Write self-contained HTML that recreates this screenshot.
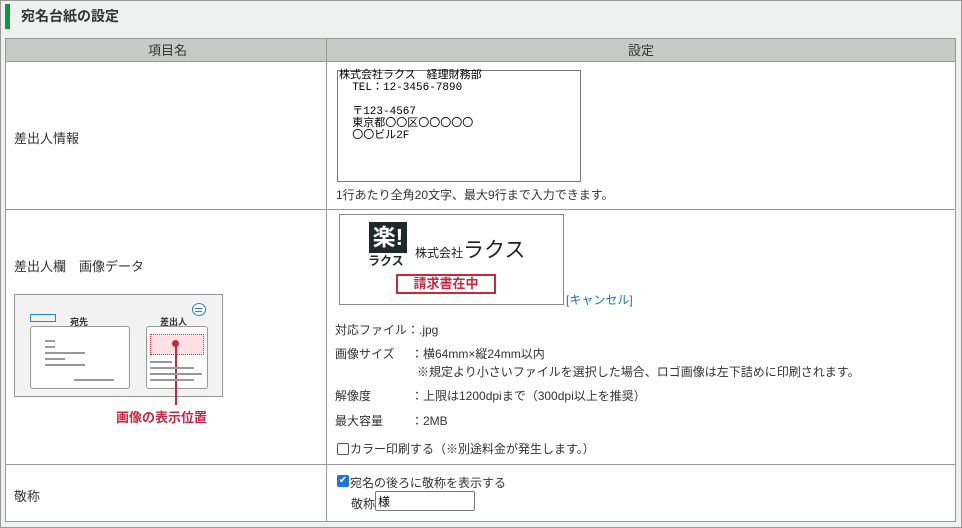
<html><head><style>
body{margin:0;width:962px;height:528px;background:#eff1f0;font-family:"Liberation Sans","Noto Sans CJK JP",sans-serif;color:#333;position:relative;overflow:hidden}
.a{position:absolute}
.t{font-size:12px;white-space:nowrap}
</style></head><body>
<div class="a" style="left:0;top:0;width:960px;height:526px;border:1px solid #999"></div>
<div class="a" style="left:5px;top:4px;width:5px;height:25px;background:#0a9a3c"></div>
<div class="a" style="left:21px;top:6px;font-size:14px;font-weight:bold;color:#333">宛名台紙の設定</div>
<div class="a" style="left:5px;top:38px;width:949px;height:482px;background:#fff;border:1px solid #999"></div>
<div class="a" style="left:6px;top:39px;width:949px;height:22px;background:#c8cac7;border-bottom:1px solid #999"></div>
<div class="a" style="left:326px;top:39px;width:1px;height:482px;background:#999"></div>
<div class="a" style="left:6px;top:209px;width:949px;height:1px;background:#999"></div>
<div class="a" style="left:6px;top:464px;width:949px;height:1px;background:#999"></div>
<div class="a t" style="left:148px;top:40px;font-size:13px">項目名</div>
<div class="a t" style="left:628px;top:40px;font-size:13px">設定</div>
<div class="a t" style="left:14px;top:128px;font-size:13px">差出人情報</div>
<div class="a t" style="left:14px;top:256px;font-size:13px">差出人欄　画像データ</div>
<div class="a t" style="left:14px;top:486px;font-size:13px">敬称</div>
<!-- textarea -->
<div class="a" style="left:337px;top:70px;width:242px;height:110px;border:1px solid #777;background:#fff"></div>
<div class="a" style="left:339px;top:70px;font-family:'Liberation Mono','Noto Sans CJK JP',monospace;font-size:11px;line-height:12px;color:#000;white-space:pre">株式会社ラクス　経理財務部
  TEL：12-3456-7890

  〒123-4567
  東京都〇〇区〇〇〇〇〇
  〇〇ビル2F</div>
<div class="a t" style="left:336px;top:186px">1行あたり全角20文字、最大9行まで入力できます。</div>
<!-- diagram -->
<div class="a" style="left:14px;top:294px;width:207px;height:101px;background:#f2f2f2;border:1px solid #999"></div>
<div class="a" style="left:30px;top:314px;width:24px;height:6px;border:1px solid #1a8ad4"></div>
<div class="a t" style="left:70px;top:315px;font-size:9px;font-weight:bold">宛先</div>
<div class="a t" style="left:160px;top:315px;font-size:9px;font-weight:bold">差出人</div>
<div class="a" style="left:192px;top:303px;width:12px;height:11px;border:1.5px solid #1a8ad4;border-radius:50%;background:#fff"></div>
<div class="a" style="left:195px;top:308px;width:7px;height:1px;background:#1a8ad4;box-shadow:0 3px #1a8ad4"></div>
<div class="a" style="left:30px;top:326px;width:98px;height:61px;border:1px solid #999;border-radius:3px;background:#fff"></div>
<div class="a" style="left:45px;top:340px;width:10px;height:2px;background:#999;box-shadow:0 6px #999"></div>
<div class="a" style="left:45px;top:352px;width:40px;height:2px;background:#999"></div>
<div class="a" style="left:45px;top:358px;width:20px;height:2px;background:#999"></div>
<div class="a" style="left:45px;top:364px;width:40px;height:2px;background:#999"></div>
<div class="a" style="left:74px;top:379px;width:40px;height:2px;background:#999"></div>
<div class="a" style="left:146px;top:326px;width:60px;height:61px;border:1px solid #999;border-radius:3px;background:#fff"></div>
<div class="a" style="left:150px;top:334px;width:52px;height:19px;border:1px dotted #d33;background:#fde0e3"></div>
<div class="a" style="left:172px;top:340px;width:7px;height:7px;border-radius:50%;background:#c8283c"></div>
<div class="a" style="left:175px;top:345px;width:2px;height:60px;background:#c8283c"></div>
<div class="a" style="left:150px;top:361px;width:22px;height:2px;background:#999"></div>
<div class="a" style="left:150px;top:367px;width:44px;height:2px;background:#999"></div>
<div class="a" style="left:150px;top:373px;width:52px;height:2px;background:#999"></div>
<div class="a" style="left:150px;top:379px;width:44px;height:2px;background:#999"></div>
<div class="a t" style="left:116px;top:407px;font-weight:bold;color:#c8283c;font-size:13px">画像の表示位置</div>
<!-- logo image -->
<div class="a" style="left:339px;top:214px;width:223px;height:89px;border:1px solid #888;background:#fff"></div>
<div class="a" style="left:369px;top:222px;width:38px;height:31px;background:#1e2a28;color:#fff;font-weight:bold;font-size:23px;line-height:31px;text-align:center">楽!</div>
<div class="a t" style="left:368px;top:252px;font-weight:bold;font-size:12px;color:#1e2a28">ラクス</div>
<div class="a t" style="left:415px;top:234px;font-size:12px;color:#222">株式会社<span style="font-size:21px">ラクス</span></div>
<div class="a" style="left:396px;top:274px;width:100px;height:20px;border:2px solid #c8283c;box-sizing:border-box;color:#c8283c;font-size:13px;font-weight:bold;text-align:center;line-height:16px">請求書在中</div>
<div class="a t" style="left:566px;top:291px;color:#1a6fb8">[キャンセル]</div>
<div class="a t" style="left:335px;top:321px">対応ファイル：.jpg</div>
<div class="a t" style="left:335px;top:345px">画像サイズ</div><div class="a t" style="left:411px;top:345px">：横64mm×縦24mm以内</div>
<div class="a t" style="left:417px;top:363px">※規定より小さいファイルを選択した場合、ロゴ画像は左下詰めに印刷されます。</div>
<div class="a t" style="left:335px;top:387px">解像度</div><div class="a t" style="left:411px;top:387px">：上限は1200dpiまで（300dpi以上を推奨）</div>
<div class="a t" style="left:335px;top:412px">最大容量</div><div class="a t" style="left:411px;top:412px">：2MB</div>
<div class="a" style="left:337px;top:443px;width:10px;height:10px;border:1px solid #555;border-radius:2px;background:#fff"></div>
<div class="a t" style="left:350px;top:440px">カラー印刷する（※別途料金が発生します。）</div>
<div class="a" style="left:337px;top:475px;width:12px;height:12px;border-radius:2px;background:#1a73e8;color:#fff;font-size:10px;line-height:12px;text-align:center">✔</div>
<div class="a t" style="left:350px;top:474px">宛名の後ろに敬称を表示する</div>
<div class="a t" style="left:351px;top:495px">敬称</div>
<div class="a" style="left:375px;top:491px;width:100px;height:20px;border:1px solid #777;border-radius:2px;background:#fff;font-size:12px;line-height:20px;padding-left:2px;color:#000;box-sizing:border-box">様</div>
</body></html>
